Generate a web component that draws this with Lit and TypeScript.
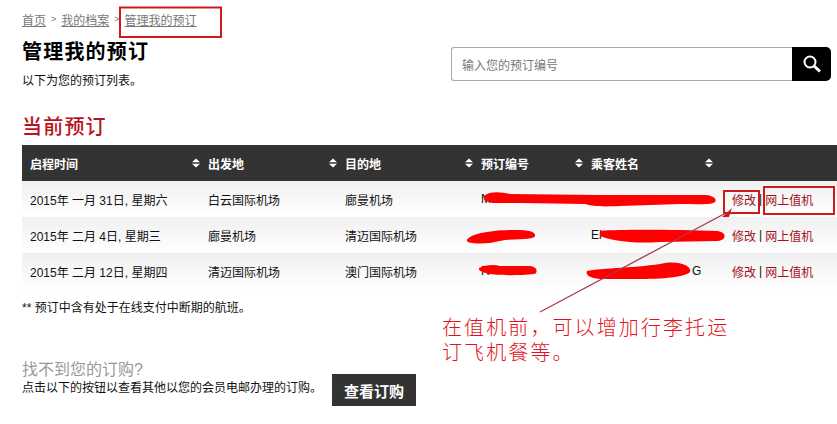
import { LitElement, html, css, svg } from "lit";
import { customElement } from "lit/decorators.js";

const rows = [
  ["2015年 一月 31日, 星期六", "白云国际机场", "廊曼机场", "M", ""],
  ["2015年 二月 4日, 星期三", "廊曼机场", "清迈国际机场", "", "Ei"],
  ["2015年 二月 12日, 星期四", "清迈国际机场", "澳门国际机场", "R", "G"],
];
const heads = ["启程时间", "出发地", "目的地", "预订编号", "乘客姓名"];

const sortIcon = html`<svg class="sort" width="8" height="10" viewBox="0 0 8 10"><path d="M4 0.5 8 4.2H0ZM4 9.5 0 5.8H8Z" fill="#fff"/></svg>`;

@customElement("app-root")
export class AppRoot extends LitElement {
  static styles = css`
    :host { display: block; width: 837px; height: 424px; position: relative; overflow: hidden; background: #fff;
      font-family: "Liberation Sans", "Noto Sans CJK SC", sans-serif; font-size: 12px; color: #111; }
    .page { padding: 11px 0 0 22px; display: flex; flex-direction: column; }
    .crumbs { display: flex; gap: 5px; align-items: center; height: 16px; color: #777; font-size: 12px; }
    .crumbs a { color: #777; text-decoration: underline; }
    .crumbs span { font-size: 9px; }
    .top { display: flex; justify-content: space-between; align-items: flex-start; margin-top: 11px; }
    h1 { margin: 0; font-size: 20px; line-height: 28px; font-weight: 700; color: #000; letter-spacing: 1.2px; }
    .intro { margin: 7px 0 0; line-height: 16px; color: #111; }
    .search { display: flex; height: 34px; width: 380px; margin: 9px 6px 0 0; }
    .field { flex: 1; box-sizing: border-box; border: 1px solid #aaa; border-right: 0; border-radius: 3px 0 0 3px; padding: 0 10px;
      display: flex; align-items: center; color: #777; }
    .go { width: 39px; background: #000; border-radius: 0 5px 5px 0; display: flex; align-items: center; justify-content: center; }
    h2 { margin: 24px 0 0; font-size: 20px; line-height: 28px; font-weight: 500; color: #bd1020; letter-spacing: 1.2px; }
    .table { margin-top: 4px; display: grid; grid-template-columns: 178px 137px 136px 110px 130px 124px; }
    .hd { height: 36px; background: #333; color: #fff; font-weight: 700; display: flex; align-items: center; justify-content: space-between; padding: 0 0 0 8px; box-sizing: border-box; }
    .cell { height: 36px; box-sizing: border-box; padding-left: 8px; display: flex; align-items: center; background: linear-gradient(#f0f0f0, #fff); white-space: nowrap; }
    .cell.tail { padding-left: 109px; }
    .actions { padding-left: 19px; }
    .actions a { color: #a3101c; }
    .actions i { font-style: normal; margin: 0 3px; color: #111; }
    .note { margin: 11px 0 0; line-height: 16px; }
    .more { margin-top: 44px; display: flex; align-items: flex-start; gap: 16px; }
    .more h3 { margin: 0; font-size: 16px; line-height: 20px; font-weight: 400; color: #999; }
    .more p { margin: 0; line-height: 16px; color: #111; width: 294px; white-space: nowrap; }
    .btn { margin-top: 14px; width: 84px; height: 32px; background: #333; color: #fff; font-size: 15px; font-weight: 700; display: flex; align-items: center; justify-content: center; }
    .marks { position: absolute; left: 0; top: 0; pointer-events: none; }
    .callout { position: absolute; left: 442px; top: 316px; font-size: 20px; line-height: 25px; letter-spacing: 2.1px; color: #df1420; font-weight: 300; white-space: nowrap; }
  `;

  render() {
    return html`
      <div class="page">
        <div class="crumbs"><a>首页</a><span>&gt;</span><a>我的档案</a><span>&gt;</span><a>管理我的预订</a></div>
        <div class="top">
          <div>
            <h1>管理我的预订</h1>
            <p class="intro">以下为您的预订列表。</p>
          </div>
          <div class="search">
            <div class="field">输入您的预订编号</div>
            <div class="go">
              <svg width="20" height="20" viewBox="0 0 20 20" fill="none" stroke="#fff">
                <circle cx="8" cy="8" r="5.5" stroke-width="2"/>
                <path d="M12 12l6 5.5" stroke-width="3"/>
              </svg>
            </div>
          </div>
        </div>
        <h2>当前预订</h2>
        <div class="table">
          ${heads.map((h) => html`<div class="hd"><span>${h}</span>${sortIcon}</div>`)}
          <div class="hd"></div>
          ${rows.map((r) => html`
            ${r.map((c) => html`<div class="cell ${c === "G" ? "tail" : ""}">${c}</div>`)}
            <div class="cell actions"><a>修改</a><i>|</i><a>网上值机</a></div>
          `)}
        </div>
        <p class="note">** 预订中含有处于在线支付中断期的航班。</p>
        <div class="more">
          <div>
            <h3>找不到您的订购?</h3>
            <p>点击以下的按钮以查看其他以您的会员电邮办理的订购。</p>
          </div>
          <div class="btn">查看订购</div>
        </div>
      </div>
      <svg class="marks" width="837" height="424" viewBox="0 0 837 424" fill="none">
        ${svg`
          <g fill="#f00">
            <path d="M484 196 C490 191 500 192 510 194 L600 195 L706 195 C714 196 717 199 715 202 C712 205 700 204 680 204 L620 206 C600 207 592 206 585 204 L520 203 L495 203 C488 203 483 200 484 196Z"/>
            <path d="M467 240 C470 234 490 230 515 230 C530 230 536 232 535 236 C534 239 525 239 505 240 L490 243 C475 244 466 243 467 240Z"/>
            <path d="M600 231 C625 229 680 230 717 231 C727 232 727 240 718 241 L660 242 C630 244 610 240 600 236Z"/>
            <path d="M479 268 C485 265 494 264 500 266 L530 266 C538 267 538 273 534 274 C515 276 495 275 489 274 C482 272 478 271 479 268Z"/>
            <path d="M587 271 C600 268 640 268 665 263 C680 261 692 266 690 272 C686 276 670 279 640 279 L600 279 C590 278 585 275 587 271Z"/>
          </g>
          <g stroke="#d0191f" stroke-width="2">
            <rect x="120" y="7.5" width="101" height="29.5"/>
            <rect x="724" y="191" width="35" height="22"/>
            <rect x="764" y="187" width="70" height="27"/>
          </g>
          <path d="M540 312 L724 214" stroke="#a83a50" stroke-width="1.3"/>
          <path d="M732 208 L722 217 L729 217 Z" fill="#d0191f"/>
        `}
      </svg>
      <div class="callout">在值机前&#xFF0C;可以增加行李托运<br />订飞机餐等。</div>
    `;
  }
}
